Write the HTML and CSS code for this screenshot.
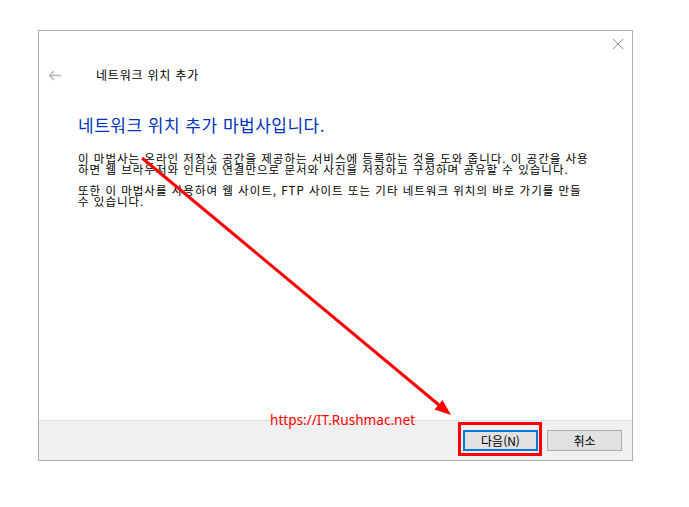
FILE: index.html
```html
<!DOCTYPE html>
<html lang="ko">
<head>
    <meta charset="UTF-8">
    <title>네트워크 위치 추가</title>
    <link rel="stylesheet" href="styles.css">
</head>
<body>
    <div class="wizard">
        <div class="title-bar">
            <button class="close-btn" aria-label="닫기">
                <svg width="12" height="12" viewBox="0 0 12 12"><path d="M1 1 L11 11 M11 1 L1 11" stroke="#8a8a8a" stroke-width="1" fill="none"/></svg>
            </button>
        </div>

        <div class="nav-row">
            <span class="back-btn">
                <svg width="13" height="11" viewBox="0 0 13 11"><path d="M6 1 L1.5 5.5 L6 10 M1.5 5.5 L13 5.5" stroke="#b4b4b4" stroke-width="1.4" fill="none"/></svg>
            </span>
            <span class="nav-title">네트워크 위치 추가</span>
        </div>

        <div class="content">
            <h1 class="main-instruction">네트워크 위치 추가 마법사입니다.</h1>
            <p class="desc">이 마법사는 온라인 저장소 공간을 제공하는 서비스에 등록하는 것을 도와 줍니다. 이 공간을 사용<br>하면 웹 브라우저와 인터넷 연결만으로 문서와 사진을 저장하고 구성하며 공유할 수 있습니다.</p>
            <p class="desc">또한 이 마법사를 사용하여 웹 사이트, FTP 사이트 또는 기타 네트워크 위치의 바로 가기를 만들<br>수 있습니다.</p>
        </div>

        <div class="footer">
            <button class="cmd-btn default-btn">다음(N)</button>
            <button class="cmd-btn">취소</button>
        </div>
    </div>

    <!-- 주석 표시 -->
    <div class="watermark">https://IT.Rushmac.net</div>
    <svg class="annotation" width="689" height="507" viewBox="0 0 689 507">
        <line x1="142" y1="158" x2="439" y2="405" stroke="#ff0000" stroke-width="3"/>
        <polygon points="451,415 434.5,409.5 442.5,400" fill="#ff0000"/>
        <rect x="459.5" y="423.5" width="81" height="31" stroke="#ff0000" stroke-width="3" fill="none"/>
    </svg>
</body>
</html>
```

FILE: styles.css
```css
* {
    margin: 0;
    padding: 0;
    box-sizing: border-box;
}

body {
    position: relative;
    width: 689px;
    height: 507px;
    overflow: hidden;
    background: #ffffff;
    font-family: "Noto Sans CJK KR", "Noto Sans", sans-serif;
    color: #000000;
}

.wizard {
    margin: 30px 0 0 38px;
    width: 595px;
    height: 431px;
    border: 1px solid #adadad;
    display: flex;
    flex-direction: column;
    background: #ffffff;
}

.title-bar {
    height: 26px;
    display: flex;
    justify-content: flex-end;
}

.close-btn {
    width: 20px;
    height: 20px;
    margin: 3px 4px 0 0;
    border: none;
    background: transparent;
    display: flex;
    align-items: center;
    justify-content: center;
}

.nav-row {
    height: 36px;
    display: flex;
    align-items: center;
    padding-left: 9px;
}

.back-btn {
    display: flex;
    width: 13px;
    margin-right: 35px;
}

.nav-title {
    font-size: 12px;
    line-height: 16px;
    letter-spacing: 0.8px;
    color: #000000;
}

.content {
    padding-left: 39px;
}

.main-instruction {
    margin-top: 21px;
    font-size: 17px;
    line-height: 22px;
    letter-spacing: 0.5px;
    font-weight: normal;
    color: #0033bc;
}

.desc {
    font-size: 11.5px;
    line-height: 11px;
    letter-spacing: 1px;
    white-space: nowrap;
    margin-top: 10px;
}

.main-instruction + .desc {
    margin-top: 17px;
}

.footer {
    margin-top: auto;
    height: 40px;
    border-top: 1px solid #dfdfdf;
    background: #f0f0f0;
    display: flex;
    justify-content: flex-end;
    align-items: center;
    gap: 9px;
    padding: 0 10px 0 0;
}

.cmd-btn {
    width: 75px;
    height: 21px;
    border: 1px solid #adadad;
    background: #e1e1e1;
    font-family: "Noto Sans CJK KR", "Noto Sans", sans-serif;
    font-size: 12px;
    line-height: 17px;
    color: #000000;
}

.default-btn {
    border: 2px solid #0078d7;
}

.watermark {
    position: absolute;
    left: 270px;
    top: 411px;
    font-family: "Noto Sans", sans-serif;
    font-size: 13.6px;
    line-height: 18px;
    color: #ff0000;
}

.annotation {
    position: absolute;
    left: 0;
    top: 0;
}
```
